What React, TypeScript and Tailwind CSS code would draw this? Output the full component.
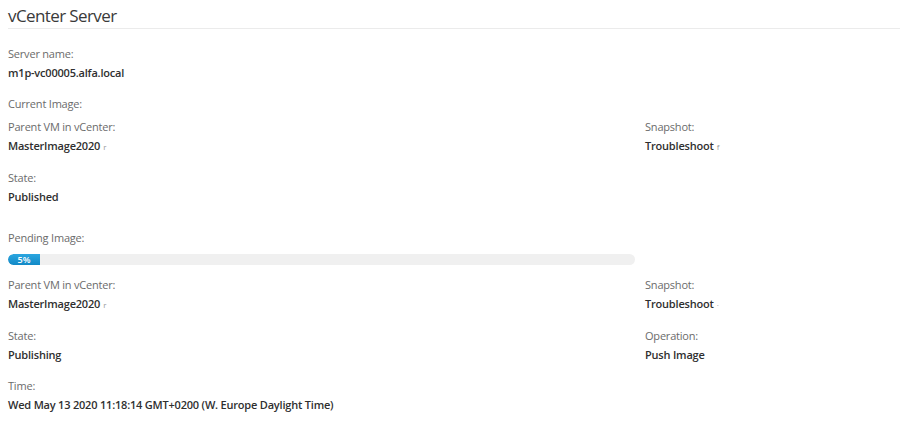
const font = { fontFamily: '"Open Sans", "Noto Sans", sans-serif' };

function Field({ label, value, tail }: { label: string; value?: string; tail?: string }) {
  return (
    <div>
      <div className="text-[11px] leading-[19px] tracking-[-0.2px] text-[#6b6b6b]">{label}</div>
      {value && (
        <div className="text-[11px] leading-[19px] tracking-[-0.2px] font-semibold text-[#2f2f2f] whitespace-nowrap">
          {value}
          {tail && <span className="ml-[3px] text-[8px] font-normal text-[#9a9a9a]">{tail}</span>}
        </div>
      )}
    </div>
  );
}

export default function App() {
  return (
    <div className="w-[900px] h-[427px] bg-white pl-2 overflow-hidden" style={font}>
      <h1 className="pt-[5px] pb-[1px] text-[17px] leading-[22px] tracking-[-0.6px] text-[#3a3a3a] border-b border-[#ebebeb]">
        vCenter Server
      </h1>

      <div className="mt-[15px] flex flex-col">
        <Field label="Server name:" value="m1p-vc00005.alfa.local" />
        <div className="mt-3 text-[11px] leading-[19px] tracking-[-0.2px] text-[#6b6b6b]">Current Image:</div>

        <div className="mt-[4px] grid grid-cols-[637px_1fr] gap-y-3">
          <Field label="Parent VM in vCenter:" value="MasterImage2020" tail="r" />
          <Field label="Snapshot:" value="Troubleshoot" tail="f" />
          <Field label="State:" value="Published" />
          <div />
        </div>

        <div className="mt-[22px] text-[11px] leading-[19px] tracking-[-0.2px] text-[#6b6b6b]">Pending Image:</div>
        <div className="mt-[7px] h-[11px] w-[627px] rounded-full bg-[#f0f0f0] overflow-hidden flex">
          <div className="w-[32px] h-full rounded-l-full bg-gradient-to-b from-[#2ba6e0] to-[#1189c6] text-white text-[9px] leading-[11px] font-semibold text-center">
            5%
          </div>
        </div>

        <div className="mt-[10px] grid grid-cols-[637px_1fr] gap-y-3">
          <Field label="Parent VM in vCenter:" value="MasterImage2020" tail="r" />
          <Field label="Snapshot:" value="Troubleshoot" tail="·" />
          <Field label="State:" value="Publishing" />
          <Field label="Operation:" value="Push Image" />
          <Field label="Time:" value="Wed May 13 2020 11:18:14 GMT+0200 (W. Europe Daylight Time)" />
        </div>
      </div>
    </div>
  );
}
